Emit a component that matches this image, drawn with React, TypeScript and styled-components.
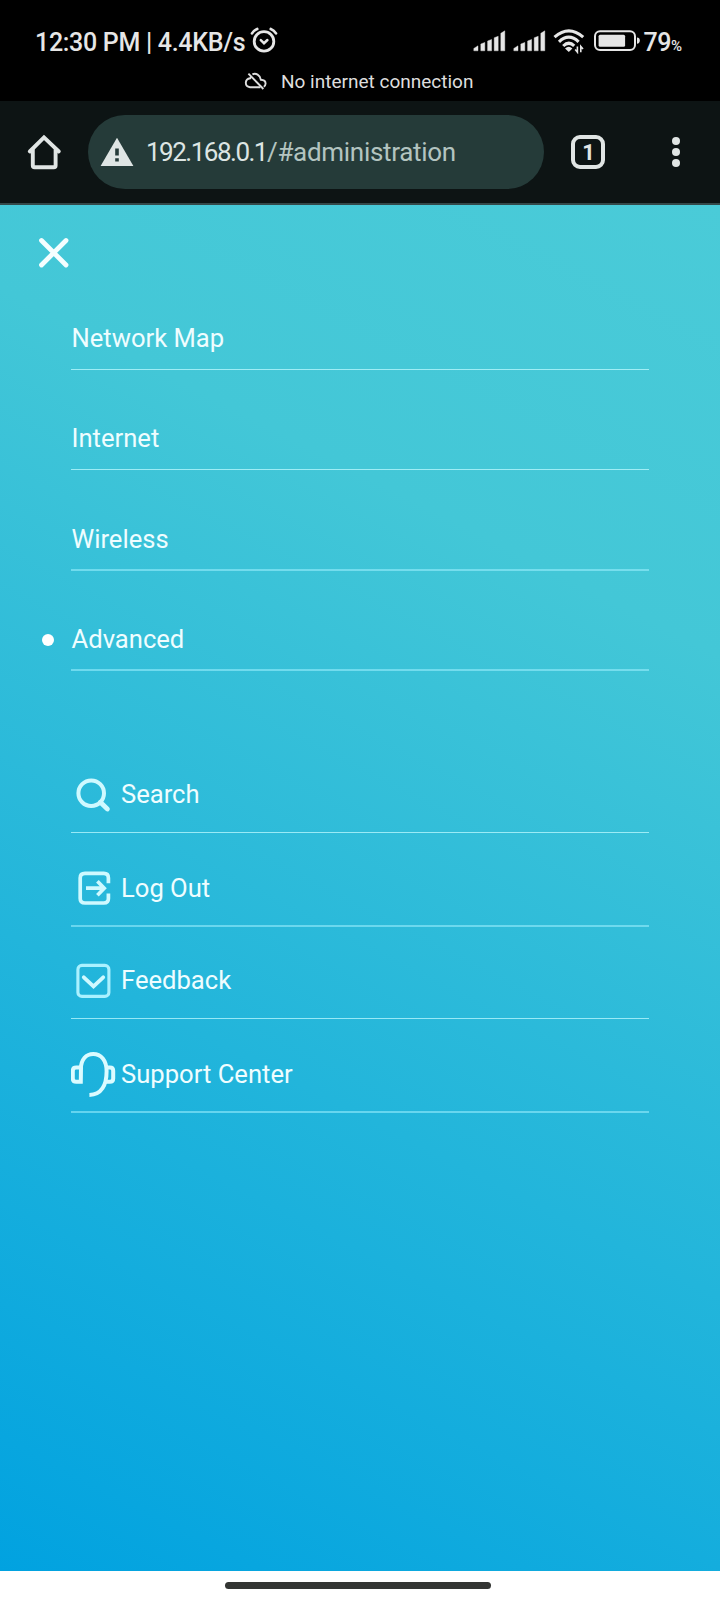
import React from "react";
import styled, { createGlobalStyle } from "styled-components";

const Global = createGlobalStyle`
  *, *::before, *::after { box-sizing: border-box; }
  html, body { margin: 0; padding: 0; background: #fff; }
  body { font-family: Roboto, "Liberation Sans", sans-serif; }
  svg { display: block; flex: none; }
`;

const Screen = styled.div`
  width: 720px;
  height: 1600px;
  display: flex;
  flex-direction: column;
  overflow: hidden;
`;

const StatusBar = styled.header`
  height: 101px;
  flex: none;
  background: #000;
  color: #e6e6e6;
  padding-top: 26px;
`;

const StatusRow = styled.div`
  height: 30px;
  display: flex;
  align-items: center;
  justify-content: space-between;
  padding: 0 39px 0 35px;
`;

const StatusGroup = styled.div`
  display: flex;
  align-items: center;
`;

const Clock = styled.span`
  font-size: 25px;
  line-height: 30px;
  font-weight: 500;
  letter-spacing: -0.3px;
  white-space: nowrap;
  margin-right: 5px;
  padding-top: 3px;
`;

const BatterySlot = styled.span`
  margin: 0 4px 0 9px;
`;

const BatteryLevel = styled.span`
  padding-top: 3px;
  font-size: 25px;
  line-height: 30px;
  font-weight: 500;
  letter-spacing: -0.5px;
  white-space: nowrap;
`;

const Percent = styled.span`
  display: inline-block;
  font-size: 15px;
  line-height: 1;
  letter-spacing: -1px;
`;

const Notice = styled.div`
  height: 26px;
  margin-top: 12px;
  display: flex;
  align-items: center;
  gap: 14px;
  padding-left: 244px;
  font-size: 19px;
  line-height: 26px;
  color: #dedede;
`;

const NoticeText = styled.span`
  padding-top: 2px;
  white-space: nowrap;
`;

const Toolbar = styled.nav`
  height: 104px;
  flex: none;
  display: flex;
  align-items: center;
  background: #0d1414;
  border-bottom: 2px solid #34494a;
  padding: 0 40px 0 27px;
`;

const AddressBar = styled.div`
  width: 456px;
  height: 74px;
  margin-left: 26px;
  padding-left: 12px;
  border-radius: 37px;
  background: #253b39;
  display: flex;
  align-items: center;
  gap: 12px;
`;

const Url = styled.span`
  font-size: 26px;
  line-height: 34px;
  letter-spacing: -1.5px;
  color: #dde5e3;
  white-space: nowrap;
`;

const UrlPath = styled.span`
  letter-spacing: -0.3px;
  color: #b3c4c0;
`;

const TabCount = styled.div`
  width: 34px;
  height: 34px;
  margin-left: 27px;
  padding-left: 1px;
  border: 4px solid #e0e5e4;
  border-radius: 9px;
  color: #e0e5e4;
  font-size: 22px;
  font-weight: 700;
  line-height: 27px;
  text-align: center;
`;

const More = styled.div`
  margin-left: auto;
  display: flex;
  flex-direction: column;
  gap: 3px;
`;

const MoreDot = styled.i`
  width: 8px;
  height: 8px;
  border-radius: 50%;
  background: #e0e5e4;
`;

const Drawer = styled.main`
  height: 1366px;
  flex: none;
  padding: 0 71px;
  color: #effdff;
  background: linear-gradient(27deg, #01a2e0 0%, #22b5db 37%, #43c7d7 74%, #4acbd8 100%);
`;

const CloseRow = styled.div`
  height: 65px;
  padding-top: 32px;
  margin-left: -33px;
`;

const Menu = styled.ul`
  margin: 0;
  padding: 0;
  list-style: none;
`;

const MenuItem = styled.li<{ $height: number; $rule: number }>`
  height: ${(p) => p.$height}px;
  display: flex;
  align-items: flex-end;
  border-bottom: ${(p) => p.$rule}px solid
    ${(p) => (p.$rule === 1 ? "rgba(190, 250, 255, 0.75)" : "rgba(160, 240, 255, 0.55)")};
  width: 578px;
`;

const Label = styled.span<{ $lift: number }>`
  font-size: 25.6px;
  line-height: 30px;
  padding-left: 0.5px;
  margin-bottom: ${(p) => p.$lift}px;
  white-space: nowrap;
`;

const ActiveDot = styled.i`
  width: 12px;
  height: 12px;
  margin: 0 17px 23px -29px;
  border-radius: 50%;
  background: #fff;
`;

const IconSlot = styled.span`
  width: 49.5px;
  height: 46px;
  flex: none;
  margin-bottom: 14px;
`;

const GestureBar = styled.footer`
  height: 29px;
  flex: none;
  display: flex;
  justify-content: center;
  padding: 11px 5px 0 0;
  background: #fff;
`;

const GesturePill = styled.div`
  width: 266px;
  height: 7px;
  border-radius: 4px;
  background: #333533;
`;

const AlarmIcon = () => (
  <svg width="28" height="28" viewBox="0 0 28 28" fill="none" stroke="#e6e6e6" strokeLinecap="round">
    <circle cx="14" cy="14.4" r="9.8" strokeWidth="2.8" />
    <path d="M2 6.4Q4 3.2 7.2 2M26 6.4Q24 3.2 20.8 2" strokeWidth="2.7" />
    <path d="M10.8 13.2L14 16.2L17.4 13" strokeWidth="2.5" />
  </svg>
);

const SignalIcon = () => (
  <svg width="40" height="26" viewBox="0 0 40 26" fill="#e6e6e6">
    <path
      d="M3 23V20.6L7.2 18V23ZM10 23V16.2L14 14.6V23ZM16.8 23V13.2L20.8 11.6V23ZM23.4 23V10L27.4 8.4V23ZM30 23V5.5L34 3V23Z"
      transform="translate(-2.2 -.2)"
      stroke="#e6e6e6"
      strokeWidth=".4"
      strokeLinejoin="round"
    />
  </svg>
);

const WifiIcon = () => (
  <svg width="32" height="26" viewBox="0 0 32 26" fill="none" stroke="#e6e6e6" strokeWidth="3.1">
    <path d="M1.5 9.2Q15.8 -3.4 30.2 9.2" />
    <path d="M6 13.8Q15.8 4.6 25.6 13.8" />
    <path d="M10.2 18Q15.8 12.6 21.2 17.8" />
    <path d="M12 20.4Q15.8 17.2 19.4 20.4L15.8 24Z" fill="#e6e6e6" stroke="none" />
    <path d="M24.4 18.4V24.2L22.2 21.6M27.8 24.2V18.4L30 21" strokeWidth="1.6" />
  </svg>
);

const BatteryIcon = () => (
  <svg width="46" height="22" viewBox="0 0 46 22">
    <rect x="1" y="1.3" width="40" height="18.6" rx="5" fill="none" stroke="#e6e6e6" strokeWidth="2" />
    <rect x="4.6" y="4.7" width="26.5" height="12" rx="1.5" fill="#e6e6e6" />
    <path d="M43 7.5Q45.8 7.5 45.8 10.6Q45.8 13.7 43 13.7Z" fill="#e6e6e6" />
  </svg>
);

const CloudOffIcon = () => (
  <svg width="23" height="18" viewBox="0 0 23 18" fill="none" stroke="#dedede" strokeWidth="1.9">
    <path d="M4.4 1.6L19.4 17" />
    <path d="M16.4 15.2H6Q1.8 14.8 1.8 10.8Q2 6.8 6.2 6.3L7 4.4" />
    <path d="M8.4 2.4Q11 1.1 13.6 2.6Q16.4 4.3 16.8 7.7Q21.6 8 21.6 11.5Q21.5 13.8 19.8 14.8" />
  </svg>
);

const HomeIcon = () => (
  <svg width="35" height="36" viewBox="0 0 35 36" fill="none" stroke="#e0e5e4" strokeWidth="3.9" strokeLinecap="round" strokeLinejoin="round">
    <path d="M2.8 17.5L17 3.4L31.8 17.5" strokeLinejoin="miter" />
    <path d="M5.8 16V31.4Q5.8 33.2 7.6 33.2H26.8Q28.6 33.2 28.6 31.4V16" />
  </svg>
);

const WarningIcon = () => (
  <svg width="34" height="30" viewBox="0 0 34 30">
    <path d="M17 .8L33.4 29H.6Z" fill="#dfe5e4" />
    <path d="M15.2 11.6H18.8V18.6H15.2ZM15.2 21.2H18.8V24.6H15.2Z" fill="#253b39" />
  </svg>
);

const CloseIcon = () => (
  <svg width="32" height="32" viewBox="0 0 32 32" stroke="#f4feff" strokeWidth="4.8" strokeLinecap="round">
    <path d="M3.5 3.5L28 28M28 3.5L3.5 28" />
  </svg>
);

const SearchIcon = () => (
  <svg width="46" height="46" viewBox="0 0 46 46" fill="none" stroke="#cff9ff" strokeWidth="4">
    <circle cx="20.2" cy="21.2" r="12.8" />
    <path d="M29.4 30.2L36.4 37" strokeWidth="4.8" strokeLinecap="round" />
  </svg>
);

const LogOutIcon = () => (
  <svg width="46" height="46" viewBox="0 0 46 46" fill="none" stroke="#cff9ff" strokeWidth="3.7">
    <path d="M37.4 18.2V13Q37.4 8.4 32.8 8.4H14Q9.2 8.4 9.2 13V33.4Q9.2 38 14 38H32.8Q37.4 38 37.4 33.4V28.4" />
    <path d="M15 23.2H32.6M26.4 16.2L33.2 23.2L26.4 30.2" />
  </svg>
);

const FeedbackIcon = () => (
  <svg width="46" height="46" viewBox="0 0 46 46" fill="none" stroke="#aaf1ff" strokeWidth="3.1">
    <rect x="6.9" y="7.4" width="31" height="31" rx="4" />
    <path d="M12.8 19.3L22.5 28.4L32.2 19.3" stroke="#cff9ff" strokeWidth="3.8" strokeLinecap="round" />
  </svg>
);

const SupportIcon = () => (
  <svg width="46" height="46" viewBox="0 0 46 46" fill="none" stroke="#dbfbff" strokeWidth="4">
    <path d="M10 16.6H5.2Q1.8 16.6 1.8 19.8V27.4Q1.8 30.8 5.2 30.8H9.8Z" />
    <path d="M9.8 17.4C10.4 8.6 15 3 22.2 3C30 3 35.6 9 35.6 20.2C35.6 34 30.5 43.6 18.4 43.9" />
    <path d="M35.8 16.6H38.9Q42.2 16.6 42.2 19.8V27.4Q42.2 30.8 38.9 30.8H35" />
  </svg>
);

const pages = [
  { label: "Network Map", height: 100, rule: 1, lift: 16 },
  { label: "Internet", height: 100, rule: 1, lift: 16 },
  { label: "Wireless", height: 101, rule: 2, lift: 15 },
  { label: "Advanced", height: 100, rule: 2, lift: 15, active: true },
];

const actions = [
  { label: "Search", height: 162, rule: 1, lift: 23, icon: <SearchIcon /> },
  { label: "Log Out", height: 94, rule: 2, lift: 22, icon: <LogOutIcon /> },
  { label: "Feedback", height: 92, rule: 1, lift: 23, icon: <FeedbackIcon /> },
  { label: "Support Center", height: 94, rule: 2, lift: 22, icon: <SupportIcon /> },
];

export default function App() {
  return (
    <>
      <Global />
      <Screen>
        <StatusBar>
          <StatusRow>
            <StatusGroup>
              <Clock>12:30 PM | 4.4KB/s</Clock>
              <AlarmIcon />
            </StatusGroup>
            <StatusGroup>
              <SignalIcon />
              <SignalIcon />
              <WifiIcon />
              <BatterySlot>
                <BatteryIcon />
              </BatterySlot>
              <BatteryLevel>
                79<Percent>%</Percent>
              </BatteryLevel>
            </StatusGroup>
          </StatusRow>
          <Notice>
            <CloudOffIcon />
            <NoticeText>No internet connection</NoticeText>
          </Notice>
        </StatusBar>
        <Toolbar>
          <HomeIcon />
          <AddressBar>
            <WarningIcon />
            <Url>
              192.168.0.1<UrlPath>/#administration</UrlPath>
            </Url>
          </AddressBar>
          <TabCount>1</TabCount>
          <More>
            <MoreDot />
            <MoreDot />
            <MoreDot />
          </More>
        </Toolbar>
        <Drawer>
          <CloseRow>
            <CloseIcon />
          </CloseRow>
          <Menu>
            {pages.map((item) => (
              <MenuItem key={item.label} $height={item.height} $rule={item.rule}>
                {item.active && <ActiveDot />}
                <Label $lift={item.lift}>{item.label}</Label>
              </MenuItem>
            ))}
          </Menu>
          <Menu>
            {actions.map((item) => (
              <MenuItem key={item.label} $height={item.height} $rule={item.rule}>
                <IconSlot>{item.icon}</IconSlot>
                <Label $lift={item.lift}>{item.label}</Label>
              </MenuItem>
            ))}
          </Menu>
        </Drawer>
        <GestureBar>
          <GesturePill />
        </GestureBar>
      </Screen>
    </>
  );
}
